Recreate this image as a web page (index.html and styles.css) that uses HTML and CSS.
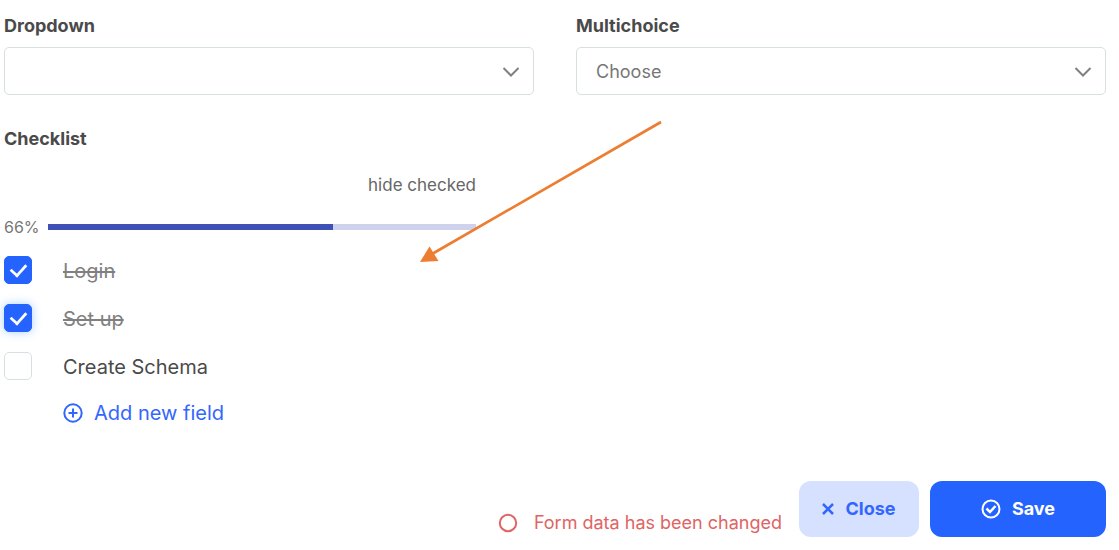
FILE: index.html
```html
<!DOCTYPE html>
<html lang="en">
<head>
    <meta charset="UTF-8">
    <meta name="viewport" content="width=device-width, initial-scale=1.0">
    <title>Form</title>
    <link rel="stylesheet" href="styles.css">
</head>
<body>
    <form class="form">
        <div class="fields">
            <div class="field">
                <label class="field-label" for="dropdown">Dropdown</label>
                <div class="select-wrap">
                    <select class="select" id="dropdown">
                        <option></option>
                    </select>
                    <svg class="chevron" viewBox="0 0 18 12" aria-hidden="true"><path d="M1.5 2 L9 9.5 L16.5 2"/></svg>
                </div>
            </div>
            <div class="field">
                <label class="field-label" for="multichoice">Multichoice</label>
                <div class="select-wrap">
                    <select class="select" id="multichoice">
                        <option>Choose</option>
                    </select>
                    <svg class="chevron" viewBox="0 0 18 12" aria-hidden="true"><path d="M1.5 2 L9 9.5 L16.5 2"/></svg>
                </div>
            </div>
            <fieldset class="field checklist">
                <legend class="field-label">Checklist</legend>
                <div class="checklist-top">
                    <button class="hide-checked" type="button">hide checked</button>
                </div>
                <div class="progress">
                    <span class="percent">66%</span>
                    <div class="bar">
                        <div class="bar-fill" style="width: 66.6%"></div>
                    </div>
                </div>
                <div class="item">
                    <input class="check" type="checkbox" id="item1" checked>
                    <label class="item-text" for="item1">Login</label>
                </div>
                <div class="item">
                    <input class="check focused" type="checkbox" id="item2" checked>
                    <label class="item-text" for="item2">Set up</label>
                </div>
                <div class="item">
                    <input class="check" type="checkbox" id="item3">
                    <label class="item-text" for="item3">Create Schema</label>
                </div>
                <button class="add" type="button">
                    <svg class="icon" viewBox="0 0 20 20" aria-hidden="true"><circle cx="10" cy="10" r="8.7"/><path d="M10 5.5V14.5M5.5 10H14.5"/></svg>
                    Add new field
                </button>
            </fieldset>
        </div>
        <div class="footer">
            <div class="status">
                <svg class="icon" viewBox="0 0 20 20" aria-hidden="true"><circle cx="10" cy="10" r="8.2"/></svg>
                Form data has been changed
            </div>
            <button class="btn btn-close" type="button">
                <svg class="cross" viewBox="0 0 12 12" aria-hidden="true"><path d="M1 1L11 11M11 1L1 11"/></svg>
                Close
            </button>
            <button class="btn btn-save" type="submit">
                <svg class="icon" viewBox="0 0 20 20" aria-hidden="true"><circle cx="10" cy="10" r="8.5"/><path d="M5.500 9.500L9 13L14.500 7" stroke-width="2.500"/></svg>
                Save
            </button>
        </div>
    </form>
    <svg class="arrow" viewBox="0 0 242 142" aria-hidden="true">
        <path class="arrow-line" d="M241 2L12 134"/>
        <path class="arrow-head" d="M0 142L9.500 126.500L18.500 141Z"/>
    </svg>
</body>
</html>
```

FILE: styles.css
```css
* {
    box-sizing: border-box;
}
body {
    position: relative;
    margin: 0;
    background: #fff;
    color: #4a4a4a;
    font-family: Inter, "Liberation Sans", sans-serif;
    font-size: 20px;
    line-height: 24px;
}
button,
select {
    font-family: inherit;
    line-height: inherit;
}
button {
    padding: 0;
    border: none;
    background: none;
    cursor: pointer;
}
svg {
    fill: none;
    stroke: currentColor;
}
.form {
    padding: 14px 13px 13px 4px;
}
.fields {
    display: grid;
    grid-template-columns: 1fr 1fr;
    gap: 32px 42px;
}
.field-label {
    display: block;
    padding: 0;
    font-size: 18px;
    font-weight: 700;
}
.select-wrap {
    position: relative;
    margin-top: 9px;
}
.select {
    display: block;
    width: 100%;
    height: 48px;
    padding: 2px 48px 0 19px;
    border: 1px solid #d8dfe2;
    border-radius: 5px;
    background: #fff;
    color: #777;
    font-size: 18px;
    appearance: none;
}
.chevron {
    position: absolute;
    top: 19px;
    right: 14px;
    width: 18px;
    height: 12px;
    stroke: #808080;
    stroke-width: 2;
    pointer-events: none;
}
.checklist {
    min-width: 0;
    margin: 0;
    padding: 0 58px 0 0;
    border: none;
}
.checklist-top {
    display: flex;
    justify-content: flex-end;
    margin-top: 22px;
}
.hide-checked {
    color: #666;
    font-size: 17px;
}
.progress {
    display: flex;
    align-items: center;
    gap: 8px;
    margin: 18px 0 7px;
}
.percent {
    color: #777;
    font-size: 16px;
}
.bar {
    flex: 1;
    height: 6px;
    background: #cfd2ed;
}
.bar-fill {
    height: 100%;
    background: #3f51b5;
}
.item {
    display: flex;
    align-items: center;
    gap: 31px;
    height: 48px;
}
.item-text {
    padding-top: 2px;
}
.check {
    display: grid;
    place-items: center;
    width: 28px;
    height: 28px;
    margin: 0;
    border: 1px solid #d8dfe2;
    border-radius: 5px;
    background: #fff;
    appearance: none;
}
.check:checked {
    border-color: #2563ff;
    background: #2563ff;
}
.check:checked::before {
    content: "";
    width: 8px;
    height: 14px;
    margin-bottom: 3px;
    border: solid #fff;
    border-width: 0 3px 3px 0;
    transform: rotate(42deg) scale(0.9);
}
.check.focused {
    box-shadow: 0 0 10px rgba(37, 140, 255, 0.4);
}
.check:checked + .item-text {
    color: #808080;
    text-decoration: line-through;
}
.add {
    display: flex;
    align-items: center;
    gap: 11px;
    height: 46px;
    margin-left: 59px;
    color: #3366ff;
    font-size: 20px;
}
.icon {
    width: 20px;
    height: 20px;
    stroke-width: 2;
}
.footer {
    display: flex;
    align-items: center;
    justify-content: flex-end;
    gap: 11px;
    margin-top: 45px;
}
.status {
    display: flex;
    align-items: center;
    gap: 16px;
    margin: 28px 6px 0 0;
    color: #e06464;
    font-size: 18px;
}
.btn {
    display: flex;
    align-items: center;
    justify-content: center;
    gap: 11px;
    height: 56px;
    border-radius: 12px;
    font-size: 18px;
    font-weight: 700;
}
.btn-close {
    width: 120px;
    background: #d6e0ff;
    color: #3366ff;
}
.btn-save {
    width: 176px;
    background: #2563ff;
    color: #fff;
}
.cross {
    width: 12px;
    height: 12px;
    stroke-width: 2.5;
}
/* callout pointing at the checklist */
.arrow {
    position: absolute;
    top: 120px;
    left: 420px;
    width: 242px;
    height: 142px;
    pointer-events: none;
}
.arrow-line {
    stroke: #ed7d31;
    stroke-width: 2.7;
}
.arrow-head {
    fill: #ed7d31;
    stroke: none;
}
```
